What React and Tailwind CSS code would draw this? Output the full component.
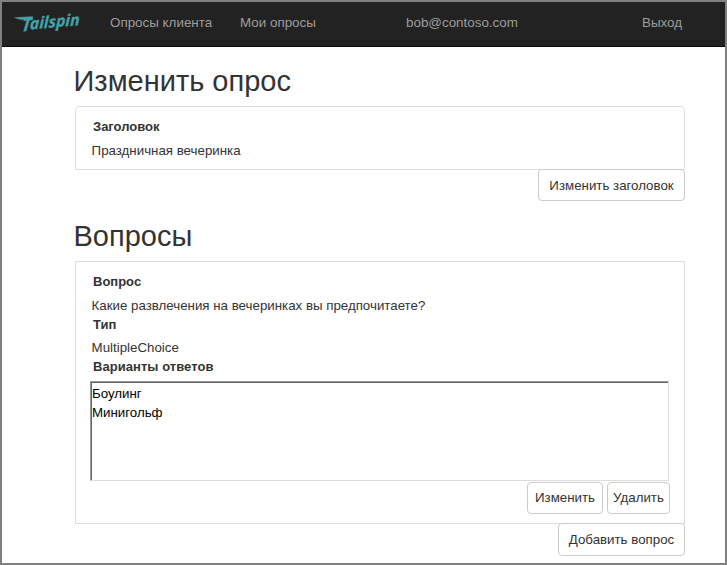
function Logo() {
  return (
    <svg className="ml-[11px] mt-[4px] h-[36px] w-[76px] shrink-0 overflow-visible" viewBox="0 -4 76 36" role="img" aria-label="Tailspin">
      <g
        fill="#44a0a9"
        stroke="#44a0a9"
        strokeWidth="0.3"
        fontWeight="700"
        fontStyle="italic"
        fontFamily="'Open Sans', 'Liberation Sans', sans-serif"
      >
        <path d="M1.5 7.6 L19.5 6.6 L18.8 8.8 Q12 9.2 9 9.8 Q5 9.4 1.5 7.6Z" />
        <text transform="translate(8.3 21.6) rotate(-5) skewX(-10)" fontSize="18" textLength="9.5" lengthAdjust="spacingAndGlyphs">T</text>
        <text transform="translate(16.8 19.4) rotate(-5) skewX(-6)" fontSize="16" textLength="50" lengthAdjust="spacing">ailspin</text>
      </g>
    </svg>
  );
}

function Button({ className, children }) {
  return (
    <button className={`flex shrink-0 items-center justify-center whitespace-nowrap rounded-[4px] border border-[#ccc] bg-white text-[13.3px] leading-[18px] text-[#333] ${className}`}>
      {children}
    </button>
  );
}

export default function App() {
  return (
    <div className="h-[565px] w-[727px] overflow-hidden border-2 border-[#808080] bg-white font-['Liberation_Sans',Arial,sans-serif] text-[13.3px] leading-[18px] text-[#333]">
      <nav className="flex h-[45px] border-b border-[#080808] bg-[#222] text-[13.4px] text-[#9d9d9d]">
        <Logo />
        <a className="ml-[21px] mt-[12px] w-[130px] whitespace-nowrap">Опросы клиента</a>
        <a className="mt-[12px] w-[166px] whitespace-nowrap">Мои опросы</a>
        <a className="mt-[12px] w-[236px] whitespace-nowrap">bob@contoso.com</a>
        <a className="mt-[12px] whitespace-nowrap">Выход</a>
      </nav>
      <main className="ml-[73px] w-[610px]">
        <h1 className="-ml-[1.5px] h-[59px] pt-[17px] text-[29px] leading-[34px]">Изменить опрос</h1>
        <section className="h-[64px] rounded-t-[4px] border border-[#ddd] pl-[16px] pt-[11px]">
          <h2 className="pl-px text-[13px] font-bold">Заголовок</h2>
          <p className="-ml-[0.4px] mt-[6px]">Праздничная вечеринка</p>
        </section>
        <div className="-mt-px flex justify-end">
          <Button className="h-[32px] w-[147px] pt-[2px]">Изменить заголовок</Button>
        </div>
        <h1 className="-ml-[1.5px] h-[60px] pt-[18px] text-[29px] leading-[34px]">Вопросы</h1>
        <section className="h-[263px] border border-[#ddd] pl-[14px] pt-[11px]">
          <h2 className="pl-[3px] text-[13px] font-bold">Вопрос</h2>
          <p className="mt-[6px] pl-[1.6px]">Какие развлечения на вечеринках вы предпочитаете?</p>
          <h2 className="mt-px pl-[3px] text-[13px] font-bold">Тип</h2>
          <p className="mt-[5px] pl-[1.6px]">MultipleChoice</p>
          <h2 className="mt-px pl-[3px] text-[13px] font-bold tracking-[0.05px]">Варианты ответов</h2>
          <div className="mt-[5px] h-[100px] w-[579px] border border-b-[#ddd] border-l-[#999] border-r-[#ddd] border-t-[#999]">
            <div className="h-full border-l border-t border-[#666] pt-[1px] leading-[19px] text-black">
              <p>Боулинг</p>
              <p>Минигольф</p>
            </div>
          </div>
          <div className="mr-[14px] mt-px flex justify-end gap-[4px]">
            <Button className="h-[32px] w-[76px]">Изменить</Button>
            <Button className="h-[32px] w-[63px]">Удалить</Button>
          </div>
        </section>
        <div className="-mt-px flex justify-end">
          <Button className="h-[33px] w-[127px]">Добавить вопрос</Button>
        </div>
      </main>
    </div>
  );
}
